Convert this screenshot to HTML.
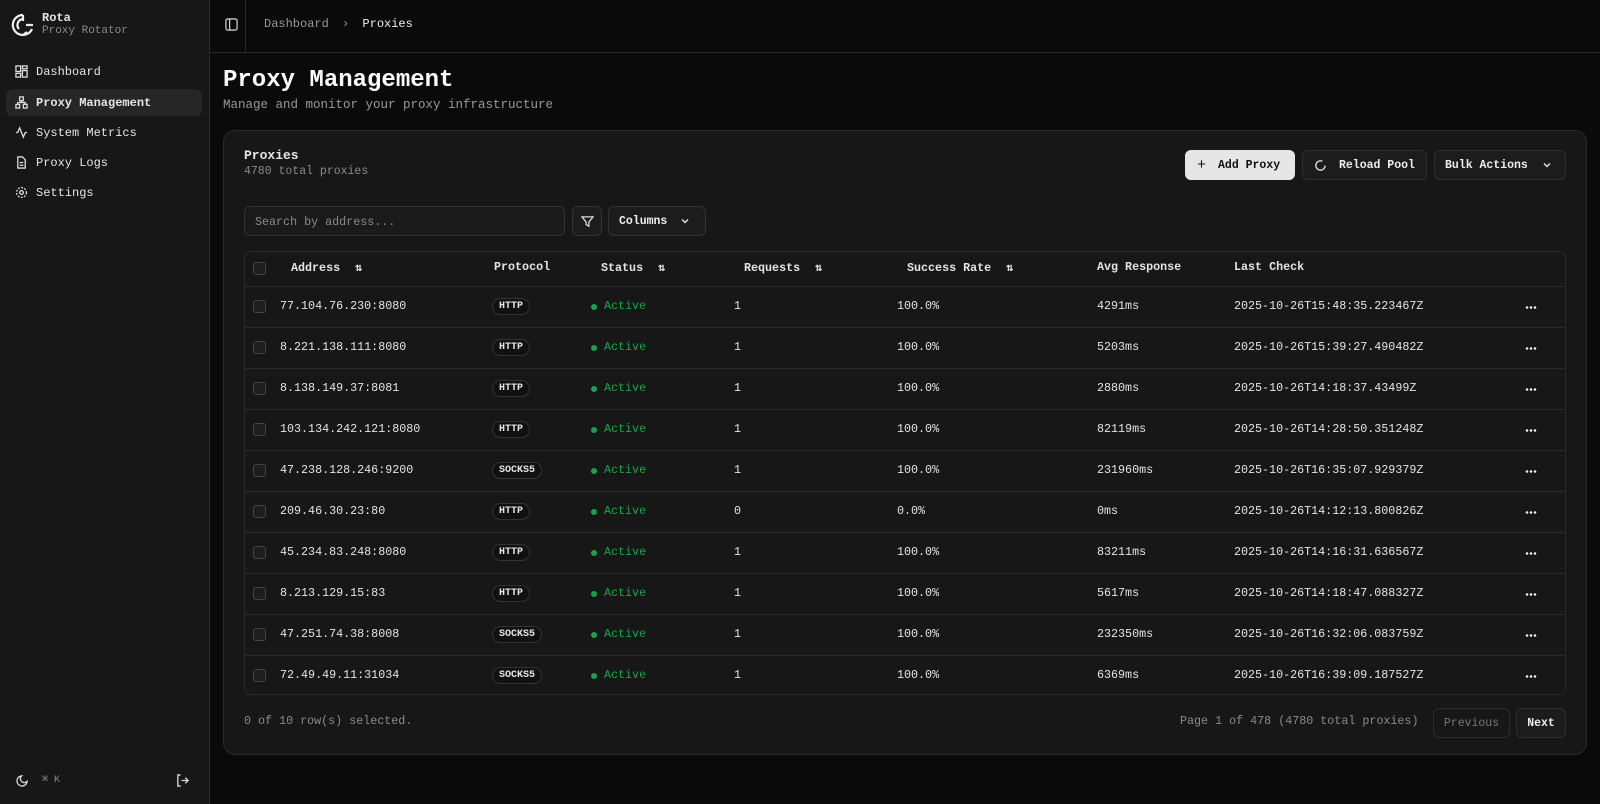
<!DOCTYPE html>
<html><head><meta charset="utf-8"><style>
*{box-sizing:border-box;margin:0;padding:0}
body{width:1600px;height:804px;background:#0a0a0a;font-family:"Liberation Mono",monospace;font-size:11.7px;color:#e5e5e5;position:relative;overflow:hidden}
.a{position:absolute;white-space:nowrap}
.side{position:absolute;left:0;top:0;width:210px;height:804px;background:#171717;border-right:1px solid #2a2a2a}
.nav{position:absolute;left:6px;width:196px;height:27px;border-radius:7px;display:flex;align-items:center;padding-left:9px;gap:8px;font-size:12px;color:#e5e5e5}
.nav svg{width:13px;height:13px}
.card{position:absolute;left:223px;top:130px;width:1364px;height:625px;background:#171717;border:1px solid #2a2a2a;border-radius:12px}
.btn{position:absolute;height:30px;border:1px solid #2e2e2e;border-radius:6px;background:#1c1c1c;display:flex;align-items:center;font-size:11.5px;font-weight:bold;color:#eee}
.tbl{position:absolute;left:244px;top:251px;width:1322px;height:444px;border:1px solid #2a2a2a;border-radius:7px}
.row{position:absolute;left:0;width:1320px;height:41px;border-top:1px solid #2a2a2a}
.cb{position:absolute;left:8px;width:13px;height:13px;border:1px solid #444;border-radius:3px;background:#1e1e1e}
.badge{position:absolute;height:17px;border:1px solid #333;border-radius:9px;font-size:10px;font-weight:bold;padding:0 6px;line-height:15px;background:#111}
.th{font-weight:bold;color:#e5e5e5}
.dots{position:absolute;left:1280px;top:19px;width:12px;height:3px;background:radial-gradient(circle,#eee 1.2px,transparent 1.4px) 0 0/4px 3px repeat-x}
</style></head><body>
<div class="side">
 <svg class="a" style="left:10px;top:12px" width="26" height="26" viewBox="0 0 26 26" fill="none" stroke="#eee" stroke-width="2.2"><path d="M13 3a10 10 0 1 0 9 14"/><path d="M13 7a6 6 0 0 0-4 10"/><path d="M13 3v6M16 13h7M17 20l-4 3"/></svg>
 <div class="a" style="left:42px;top:11px;font-weight:bold;font-size:12px">Rota</div>
 <div class="a" style="left:42px;top:25px;font-size:11px;color:#8a8a8a">Proxy Rotator</div>
 <div class="nav" style="top:58px"><svg viewBox="0 0 14 14" fill="none" stroke="#ddd" stroke-width="1.4"><rect x="1" y="1" width="5" height="6"/><rect x="8" y="1" width="5" height="3"/><rect x="1" y="9" width="5" height="4"/><rect x="8" y="6" width="5" height="7"/></svg>Dashboard</div>
 <div class="nav" style="top:89px;background:#262626;font-weight:bold"><svg viewBox="0 0 14 14" fill="none" stroke="#ddd" stroke-width="1.4"><rect x="5" y="1" width="4" height="4"/><rect x="1" y="9" width="4" height="4"/><rect x="9" y="9" width="4" height="4"/><path d="M3 9V7h8v2M7 5v2"/></svg>Proxy Management</div>
 <div class="nav" style="top:119px"><svg viewBox="0 0 14 14" fill="none" stroke="#ddd" stroke-width="1.4"><path d="M1 7h2l2-5 4 10 2-5h2"/></svg>System Metrics</div>
 <div class="nav" style="top:149px"><svg viewBox="0 0 14 14" fill="none" stroke="#ddd" stroke-width="1.4"><path d="M3 1h5l3 3v9H3z"/><path d="M5 7h4M5 10h4"/></svg>Proxy Logs</div>
 <div class="nav" style="top:179px"><svg viewBox="0 0 14 14" fill="none" stroke="#ddd" stroke-width="1.4"><circle cx="7" cy="7" r="2"/><circle cx="7" cy="7" r="5.3" stroke-dasharray="2 1.5"/></svg>Settings</div>
 <svg class="a" style="left:16px;top:774px" width="13" height="13" viewBox="0 0 14 14" fill="none" stroke="#ddd" stroke-width="1.4"><path d="M12 8A5.5 5.5 0 1 1 6 2a4 4 0 0 0 6 6z"/></svg>
 <div class="a" style="left:42px;top:774px;font-size:10px;color:#888">⌘ K</div>
 <svg class="a" style="left:176px;top:774px" width="13" height="13" viewBox="0 0 14 14" fill="none" stroke="#ddd" stroke-width="1.4"><path d="M5 1H2v12h3M6 7h7M10 4l3 3-3 3"/></svg>
</div>
<div class="a" style="left:210px;top:52px;width:1390px;height:1px;background:#262626"></div>
<div class="a" style="left:245px;top:0;width:1px;height:52px;background:#262626"></div>
<svg class="a" style="left:225px;top:18px" width="13" height="13" viewBox="0 0 14 14" fill="none" stroke="#ccc" stroke-width="1.4"><rect x="1" y="1" width="12" height="12" rx="2"/><path d="M5 1v12"/></svg>
<div class="a" style="left:264px;top:17px;font-size:12px;color:#999">Dashboard <span style="margin:0 6px">›</span> <span style="color:#eee">Proxies</span></div>
<div class="a" style="left:223px;top:67px;font-size:24px;font-weight:bold;color:#fafafa">Proxy Management</div>
<div class="a" style="left:223px;top:98px;font-size:12.5px;color:#999">Manage and monitor your proxy infrastructure</div>
<div class="card"></div>
<div class="a" style="left:244px;top:148px;font-size:13px;font-weight:bold">Proxies</div>
<div class="a" style="left:244px;top:165px;font-size:11.5px;color:#8a8a8a">4780 total proxies</div>
<div class="btn" style="left:1185px;top:150px;width:110px;background:#e6e6e6;color:#111;border-color:#e6e6e6"><span style="margin:0 12px 0 11px;font-size:15px;font-weight:normal">+</span>Add Proxy</div>
<div class="btn" style="left:1302px;top:150px;width:125px"><svg style="margin:0 12px 0 11px" width="13" height="13" viewBox="0 0 14 14" fill="none" stroke="#ddd" stroke-width="1.5"><path d="M12 7a5 5 0 1 1-3-4.6"/></svg>Reload Pool</div>
<div class="btn" style="left:1434px;top:150px;width:132px;padding-left:10px">Bulk Actions<svg style="margin-left:14px" width="10" height="10" viewBox="0 0 10 10" fill="none" stroke="#ddd" stroke-width="1.5"><path d="M2 3.5l3 3 3-3"/></svg></div>
<div class="a" style="left:244px;top:206px;width:321px;height:30px;border:1px solid #333;border-radius:6px;background:#1a1a1a;padding:8px 10px;color:#8a8a8a;font-size:11.7px">Search by address...</div>
<div class="a" style="left:572px;top:206px;width:30px;height:30px;border:1px solid #333;border-radius:6px;background:#1c1c1c"><svg style="margin:8px" width="13" height="13" viewBox="0 0 14 14" fill="none" stroke="#ddd" stroke-width="1.4"><path d="M1 2h12L8.5 7.5V12l-3-1.5v-3z"/></svg></div>
<div class="btn" style="left:608px;top:206px;width:98px;padding-left:10px;border-color:#333">Columns<svg style="margin-left:13px" width="10" height="10" viewBox="0 0 10 10" fill="none" stroke="#ddd" stroke-width="1.5"><path d="M2 3.5l3 3 3-3"/></svg></div>
<div class="tbl">
 <div class="cb" style="top:10px"></div>
 <div class="a th" style="left:46px;top:8px">Address <span style="margin-left:8px">⇅</span></div>
 <div class="a th" style="left:249px;top:8px">Protocol</div>
 <div class="a th" style="left:356px;top:8px">Status <span style="margin-left:8px">⇅</span></div>
 <div class="a th" style="left:499px;top:8px">Requests <span style="margin-left:8px">⇅</span></div>
 <div class="a th" style="left:662px;top:8px">Success Rate <span style="margin-left:8px">⇅</span></div>
 <div class="a th" style="left:852px;top:8px">Avg Response</div>
 <div class="a th" style="left:989px;top:8px">Last Check</div>
 <div id="rows"></div>
</div>
<div class="a" style="left:244px;top:714px;color:#8a8a8a">0 of 10 row(s) selected.</div>
<div class="a" style="left:1180px;top:714px;color:#8a8a8a">Page 1 of 478 (4780 total proxies)</div>
<div class="btn" style="left:1433px;top:708px;width:77px;justify-content:center;color:#777;font-weight:normal;background:#171717">Previous</div>
<div class="btn" style="left:1516px;top:708px;width:50px;justify-content:center">Next</div>
<script>
var d=[["77.104.76.230:8080","HTTP","1","100.0%","4291ms","2025-10-26T15:48:35.223467Z"],["8.221.138.111:8080","HTTP","1","100.0%","5203ms","2025-10-26T15:39:27.490482Z"],["8.138.149.37:8081","HTTP","1","100.0%","2880ms","2025-10-26T14:18:37.43499Z"],["103.134.242.121:8080","HTTP","1","100.0%","82119ms","2025-10-26T14:28:50.351248Z"],["47.238.128.246:9200","SOCKS5","1","100.0%","231960ms","2025-10-26T16:35:07.929379Z"],["209.46.30.23:80","HTTP","0","0.0%","0ms","2025-10-26T14:12:13.800826Z"],["45.234.83.248:8080","HTTP","1","100.0%","83211ms","2025-10-26T14:16:31.636567Z"],["8.213.129.15:83","HTTP","1","100.0%","5617ms","2025-10-26T14:18:47.088327Z"],["47.251.74.38:8008","SOCKS5","1","100.0%","232350ms","2025-10-26T16:32:06.083759Z"],["72.49.49.11:31034","SOCKS5","1","100.0%","6369ms","2025-10-26T16:39:09.187527Z"]];
var h="";d.forEach(function(r,i){var t=34+i*41;h+='<div class="row" style="top:'+t+'px"><div class="cb" style="top:13px"></div><div class="a" style="left:35px;top:12px">'+r[0]+'</div><div class="badge a" style="left:247px;top:11px">'+r[1]+'</div><div class="a" style="left:346px;top:17px;width:6px;height:6px;border-radius:50%;background:#16a34a"></div><div class="a" style="left:359px;top:12px;color:#16a34a">Active</div><div class="a" style="left:489px;top:12px">'+r[2]+'</div><div class="a" style="left:652px;top:12px">'+r[3]+'</div><div class="a" style="left:852px;top:12px">'+r[4]+'</div><div class="a" style="left:989px;top:12px">'+r[5]+'</div><div class="dots"></div></div>'});
document.getElementById("rows").innerHTML=h;
</script>
</body></html>
